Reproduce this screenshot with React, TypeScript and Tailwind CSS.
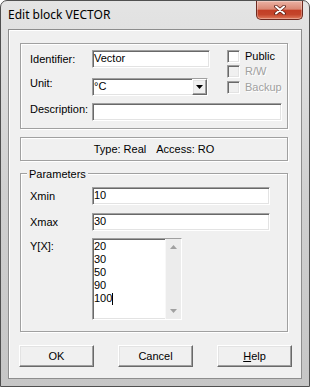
import React from "react";

// classic Win32 control edges
const sunken =
  "border border-t-[#a0a0a0] border-l-[#a0a0a0] border-r-white border-b-white shadow-[inset_1px_1px_0_#696969,inset_-1px_-1px_0_#e3e3e3]";
const raised =
  "border border-t-white border-l-white border-r-[#696969] border-b-[#696969] bg-[#f0f0f0] shadow-[inset_-1px_-1px_0_#a0a0a0,inset_1px_1px_0_#e3e3e3]";
const etched = "border border-[#a0a0a0] shadow-[1px_1px_0_#fff,inset_1px_1px_0_#fff]";

function Edit({ value, width }: { value?: string; width: string }) {
  return <div className={`${sunken} ${width} h-[18px] bg-white pl-[1px] pt-[1px] leading-[13px]`}>{value}</div>;
}

function Check({ label, disabled }: { label: string; disabled?: boolean }) {
  return (
    <div className="flex items-center gap-[5px] h-[13px]">
      <div className={`${sunken} w-[13px] h-[13px] ${disabled ? "bg-[#f0f0f0]" : "bg-white"}`} />
      <span className={disabled ? "text-[#a0a0a0] [text-shadow:1px_1px_0_#fff]" : ""}>{label}</span>
    </div>
  );
}

function Arrow({ up, color }: { up?: boolean; color: string }) {
  return (
    <svg width="7" height="4" viewBox="0 0 7 4">
      <polygon points={up ? "0,4 7,4 3.5,0" : "0,0 7,0 3.5,4"} fill={color} />
    </svg>
  );
}

function Button({ children }: { children: React.ReactNode }) {
  return <div className={`${raised} w-[75px] h-[22px] flex items-center justify-center`}>{children}</div>;
}

export default function App() {
  return (
    <div className="w-[310px] h-[387px] bg-white">
      <div className="relative w-[310px] h-[387px] flex flex-col rounded-t-[7px] border border-[#505050] bg-linear-to-b from-[#e4e4e4] via-[#d0d0d0] to-[#c6c6c6] [font-family:'Liberation_Sans',Arial,sans-serif] text-[11px] leading-[13px] text-black">
        {/* title bar */}
        <div className="h-[28px] flex items-center pl-[7px] pb-[1px] [font-family:'Noto_Sans','Open_Sans',sans-serif] text-[12px]">
          Edit block VECTOR
        </div>
        <div className="absolute top-0 right-[6px] w-[47px] h-[19px] rounded-b-[5px] border border-t-0 border-[#6e2a20] bg-[linear-gradient(to_bottom,#ebb2a4_0%,#da8874_45%,#c33e25_52%,#c4452b_75%,#e07a5c_100%)] shadow-[inset_0_0_0_1px_rgba(255,255,255,0.3)] flex items-center justify-center">
          <svg width="12" height="10" viewBox="0 0 12 10">
            <path d="M2 1.5 L10 8.5 M10 1.5 L2 8.5" stroke="#5a1d14" strokeWidth="3.6" strokeLinecap="round" />
            <path d="M2 1.5 L10 8.5 M10 1.5 L2 8.5" stroke="#ffffff" strokeWidth="2" strokeLinecap="round" />
          </svg>
        </div>

        {/* client area */}
        <div className="flex-1 mx-[7px] mb-[7px] border border-[#8d8d8d] bg-[#f0f0f0] shadow-[inset_1px_1px_0_#fff] flex flex-col pl-[11px]">
          {/* block group */}
          <div className={`${etched} w-[268px] h-[86px] mt-[13px] pt-[6px] pl-[9px] flex flex-col`}>
            <div className="flex">
              <div className="w-[180px] flex flex-col">
                <div className="flex items-start">
                  <span className="w-[62px] mt-[3px]">Identifier:</span>
                  <Edit value="Vector" width="w-[118px]" />
                </div>
                <div className="flex items-start mt-[10px]">
                  <span className="w-[62px] -mt-[1px]">Unit:</span>
                  <div className={`${sunken} w-[116px] h-[18px] bg-white flex`}>
                    <span className="flex-1 pl-[1px] pt-[1px]">°C</span>
                    <div className={`${raised} w-[15px] h-full flex items-center justify-center`}>
                      <Arrow color="#000" />
                    </div>
                  </div>
                </div>
              </div>
              <div className="ml-[17px] flex flex-col gap-[2px]">
                <Check label="Public" />
                <Check label="R/W" disabled />
                <div className="mt-[1px]">
                  <Check label="Backup" disabled />
                </div>
              </div>
            </div>
            <div className="flex items-start mt-[7px]">
              <span className="w-[62px]">Description:</span>
              <Edit width="w-[190px]" />
            </div>
          </div>

          {/* type info */}
          <div className={`${etched} w-[268px] h-[24px] mt-[8px] flex items-center justify-center gap-[10px]`}>
            <span>Type: Real</span>
            <span>Access: RO</span>
          </div>

          {/* parameters */}
          <div className={`${etched} relative w-[268px] mt-[12px] pt-[13px] pl-[9px] pb-[11px] flex flex-col`}>
            <span className="absolute -top-[6px] left-[6px] px-[2px] bg-[#f0f0f0]">Parameters</span>
            <div className="flex items-start">
              <span className="w-[62px] mt-[3px]">Xmin</span>
              <Edit value="10" width="w-[178px]" />
            </div>
            <div className="flex items-start mt-[8px]">
              <span className="w-[62px] mt-[3px]">Xmax</span>
              <Edit value="30" width="w-[178px]" />
            </div>
            <div className="flex items-start mt-[7px]">
              <span className="w-[62px] mt-[2px]">Y[X]:</span>
              <div className={`${sunken} w-[90px] h-[82px] bg-white flex`}>
                <div className="flex-1 pl-[1px] pt-[1px] leading-[13px]">
                  <div>20</div>
                  <div>30</div>
                  <div>50</div>
                  <div>90</div>
                  <div className="flex items-center">
                    100<span className="inline-block w-px h-[12px] bg-black" />
                  </div>
                </div>
                <div className="w-[16px] h-full bg-[#ececec] border-l border-[#f8f8f8] flex flex-col justify-between">
                  <div className="h-[16px] flex items-center justify-center">
                    <Arrow up color="#a0a0a0" />
                  </div>
                  <div className="h-[16px] flex items-center justify-center">
                    <Arrow color="#a0a0a0" />
                  </div>
                </div>
              </div>
            </div>
          </div>

          {/* buttons */}
          <div className="w-[273px] -ml-[1px] mt-[13px] flex justify-between">
            <Button>OK</Button>
            <Button>Cancel</Button>
            <Button>
              <span>
                <span className="underline">H</span>elp
              </span>
            </Button>
          </div>
        </div>
      </div>
    </div>
  );
}
